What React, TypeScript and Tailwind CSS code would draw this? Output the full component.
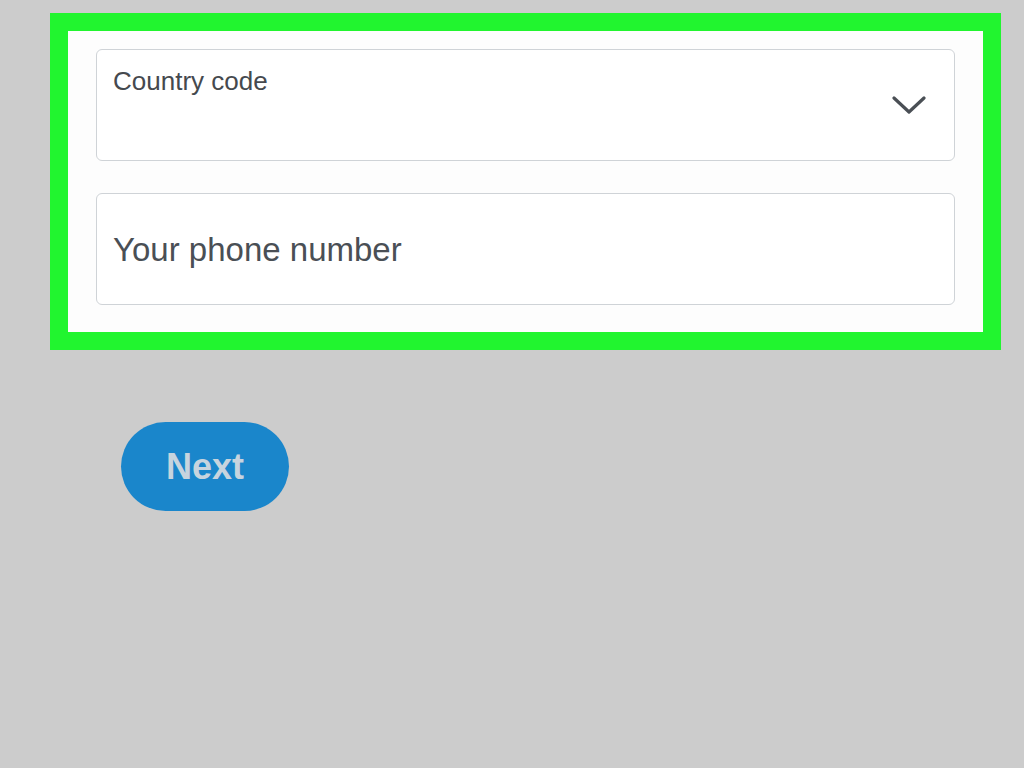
import React from 'react';

const App: React.FC = () => {
  return (
    <div className="min-h-[768px] w-[1024px] bg-[#cccccc] pt-[13px] pl-[50px] font-['Liberation_Sans',Arial,sans-serif]">
      {/* Highlighted form */}
      <div className="w-[951px] border-[18px] border-[#21f52f] bg-[#fdfdfd] pt-[18px] pb-[27px] pl-[28px] pr-[28px] flex flex-col gap-[32px]">
        <div className="h-[112px] rounded-[6px] border border-[#cfd3d7] bg-white flex items-center justify-between relative">
          <span className="absolute left-[16px] top-[18px] text-[26px] leading-none text-[#45494e]">
            Country code
          </span>
          <span />
          <svg className="mr-[28px] w-[34px] h-[20px]" viewBox="0 0 34 20" fill="none">
            <path d="M2 3 L17 17 L32 3" stroke="#4a4f55" strokeWidth="3.2" strokeLinecap="round" strokeLinejoin="round" />
          </svg>
        </div>
        <div className="h-[112px] rounded-[6px] border border-[#cfd3d7] bg-white flex items-center px-[16px]">
          <span className="text-[33px] leading-none text-[#4a4f55]">Your phone number</span>
        </div>
      </div>

      {/* Next button */}
      <div className="mt-[72px] ml-[71px]">
        <button className="w-[168px] h-[89px] rounded-full bg-[#1a86cb] flex items-center justify-center">
          <span className="text-[36px] font-bold text-[#c7d4de] leading-none">Next</span>
        </button>
      </div>
    </div>
  );
};

export default App;
